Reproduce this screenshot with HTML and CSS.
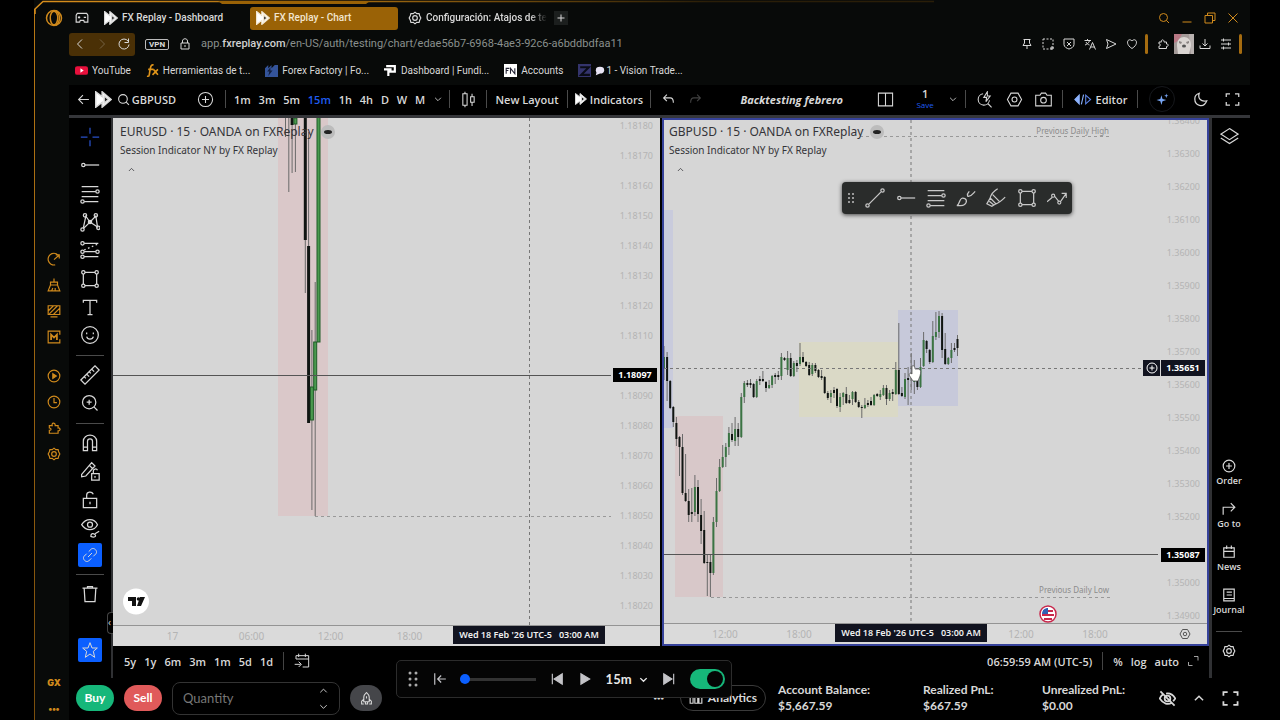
FILE: index.html
```
<!DOCTYPE html>
<html lang="en">
<head>
    <meta charset="UTF-8" />
    <meta name="viewport" content="width=device-width, initial-scale=1" />
    <title>FX Replay - Chart</title>
    <link rel="stylesheet" href="styles.css">
</head>
<body>
    <!-- shared icons -->
    <svg class="sprite" width="0" height="0" aria-hidden="true">
        <symbol id="i-fx" viewBox="0 0 24 24"><path d="M1 1l9 7V1l13 11-13 11v-7l-9 7z" fill="#fff"/><path d="M13 7l6 5-6 5z" fill="#222"/></symbol>
        <symbol id="i-gear" viewBox="0 0 24 24"><path d="M12 2l3 2.500 4-.2 1 3.700 2 4-2 4-1 3.700-4-.2L12 22l-3-2.500-4 .2-1-3.700-2-4 2-4 1-3.700 4 .2z"/><circle cx="12" cy="12" r="4"/></symbol>
        <symbol id="i-hex" viewBox="0 0 24 24"><path d="M7 3h10l5 9-5 9H7l-5-9z"/><circle cx="12" cy="12" r="3.500"/></symbol>
        <symbol id="i-puzzle" viewBox="0 0 24 24"><path d="M4 8h5c-2-5 5-6 5-1v1h5v4c4-1 5 5 0 5v4H4v-5c4 0 4-4 0-4z"/></symbol>
        <symbol id="i-down" viewBox="0 0 24 24"><path d="M5 9l7 7 7-7"/></symbol>
        <symbol id="i-up" viewBox="0 0 24 24"><path d="M5 16l7-7 7 7"/></symbol>
        <symbol id="i-full" viewBox="0 0 24 24"><path d="M2 8V3h6M16 3h6v5M22 16v5h-6M8 21H2v-5"/></symbol>
        <symbol id="i-search" viewBox="0 0 24 24"><circle cx="11" cy="11" r="8"/><path d="M17 17l5 5"/></symbol>
        <symbol id="i-plus" viewBox="0 0 24 24"><circle cx="12" cy="12" r="10"/><path d="M12 7v10M7 12h10"/></symbol>
        <symbol id="i-ray" viewBox="0 0 24 24"><circle cx="4" cy="12" r="2"/><path d="M6 12h17"/></symbol>
        <symbol id="i-fib" viewBox="0 0 24 24"><path d="M2 3h20M2 9h17M2 15h20M5 21h17"/><circle cx="21" cy="9" r="2"/><circle cx="3" cy="21" r="2"/></symbol>
        <symbol id="i-rect" viewBox="0 0 24 24"><path d="M4 6v12M20 6v12M6 4h12M6 20h12"/><circle cx="4" cy="4" r="2"/><circle cx="20" cy="4" r="2"/><circle cx="4" cy="20" r="2"/><circle cx="20" cy="20" r="2"/></symbol>
    </svg>

    <div class="window">
        <svg class="frame" width="100%" height="14" aria-hidden="true">
            <defs><linearGradient id="fade"><stop offset="0" stop-color="#d98f1c"/><stop offset="0.350" stop-color="#a56c10"/><stop offset="0.750" stop-color="#2a1e08"/></linearGradient></defs>
            <path d="M1 14V9L9 1.500H900" fill="none" stroke="url(#fade)" stroke-width="1.500"/>
            <path d="M184 1h152l-4 3H188z" fill="#9a6206"/>
        </svg>
        <nav class="gx-sidebar" aria-label="Browser sidebar">
            <svg class="opera" viewBox="0 0 24 24"><circle cx="12" cy="12" r="10"/><ellipse cx="12" cy="12" rx="5" ry="9"/><path d="M14 2c7 4 7 16 0 20"/></svg>
            <div class="gx-group">
                <svg viewBox="0 0 24 24"><path d="M21 8a10 10 0 1 0-7 14M12 13l8-7M15 5h6v6"/></svg>
                <svg viewBox="0 0 24 24"><path d="M12 1v6M6 7h12v5H6zM6 12l-4 10h20l-4-10M8 22l2-5M14 22v-5"/></svg>
                <svg viewBox="0 0 24 24"><path d="M2 3h20v15H2zM2 12l9-9M4 17L18 3M11 18L22 7M6 22h12"/></svg>
                <svg viewBox="0 0 24 24"><path d="M22 8V2H2v20h20v-6"/><path d="M7 17V8l5 5 5-5v9" stroke-width="3"/></svg>
            </div>
            <div class="gx-group">
                <svg viewBox="0 0 24 24"><circle cx="12" cy="12" r="10"/><path d="M10 8l6 4-6 4z" fill="currentColor"/></svg>
                <svg viewBox="0 0 24 24"><circle cx="12" cy="12" r="10"/><path d="M12 5v8h5"/></svg>
                <svg><use href="#i-puzzle"/></svg>
                <svg><use href="#i-gear"/></svg>
            </div>
            <div class="gx-foot"><b>GX</b><b>•••</b></div>
        </nav>

        <div class="main">
            <div class="tabs">
                <svg class="game" viewBox="0 0 24 24"><path d="M4 4h16l2 3v12h-6l-1-3H9l-1 3H2V7zM7 9v4M5 11h4M15 11h4"/></svg>
                <a class="tab" href="#"><svg><use href="#i-fx"/></svg><span>FX Replay - Dashboard</span></a>
                <a class="tab active" href="#"><svg><use href="#i-fx"/></svg><span>FX Replay - Chart</span></a>
                <a class="tab cut" href="#"><svg><use href="#i-gear"/></svg><span>Configuración: Atajos de te</span></a>
                <button class="new-tab" aria-label="New tab"><svg viewBox="0 0 24 24"><path d="M12 5v14M5 12h14"/></svg></button>
                <div class="win-buttons">
                    <svg><use href="#i-search"/></svg>
                    <svg viewBox="0 0 24 24"><path d="M3 20h18"/></svg>
                    <svg viewBox="0 0 24 24"><path d="M2 7h15v15H2zM7 7V2h15v15h-5"/></svg>
                    <svg viewBox="0 0 24 24"><path d="M3 3l18 18M21 3L3 21"/></svg>
                </div>
            </div>

            <div class="address">
                <div class="nav-buttons">
                    <button aria-label="Back"><svg viewBox="0 0 24 24"><path d="M16 3l-9 9 9 9"/></svg></button>
                    <button aria-label="Forward" class="off"><svg viewBox="0 0 24 24"><path d="M8 3l9 9-9 9"/></svg></button>
                    <button aria-label="Reload"><svg viewBox="0 0 24 24"><path d="M20 6a10 10 0 1 0 2 7M21 1v8h-8"/></svg></button>
                </div>
                <span class="vpn">VPN</span>
                <svg class="lock" viewBox="0 0 24 24"><path d="M4 10h16v12H4zM7 10V6c0-6 10-6 10 0v4M12 14v4"/></svg>
                <span class="url">app.<b>fxreplay.com</b>/en-US/auth/testing/chart/edae56b7-6968-4ae3-92c6-a6bddbdfaa11</span>
                <div class="extensions">
                    <svg viewBox="0 0 24 24"><path d="M5 3h14M7 3v7l-3 5h16l-3-5V3M12 15v7"/></svg>
                    <svg viewBox="0 0 24 24"><path d="M2 2h20v20H2z" stroke-dasharray="4 3"/><path d="M20 16v8M16 20h8"/></svg>
                    <svg viewBox="0 0 24 24"><path d="M2 2h20v11c0 5-6 8-10 9-4-1-10-4-10-9zM8 8l8 8M16 8l-8 8"/></svg>
                    <svg viewBox="0 0 24 24"><path d="M1 5h13M7 2v3M11 5c-1 5-5 8-9 9M4 8c2 4 4 5 7 6M11 23l6-14 6 14M13 18h8"/></svg>
                    <svg viewBox="0 0 24 24"><path d="M3 3l19 9-19 9 3-9z"/></svg>
                    <svg viewBox="0 0 24 24"><path d="M12 21C-4 11 5-2 12 6c7-8 16 5 0 15z"/></svg>
                    <i class="bar"></i>
                    <svg><use href="#i-puzzle"/></svg>
                    <svg class="avatar" viewBox="0 0 20 20"><path d="M0 0h20v20H0z" fill="#a39a98"/><path d="M0 0h8L4 7 0 9z" fill="#b87884"/><path d="M15 0h5v20h-3z" fill="#b8b2b0"/><path d="M4 20l-1-8c-1-12 15-12 14 0l-2 8z" fill="#dad5d2"/><path d="M5 7l3 1-1 2-2-1zM15 7l-3 1 1 2 2-1z" fill="#8a8482"/><ellipse cx="10" cy="12" rx="2" ry="1.500" fill="#555"/></svg>
                    <svg viewBox="0 0 24 24"><path d="M12 2v14M7 11l5 5 5-5M2 15v6h20v-6"/></svg>
                    <svg viewBox="0 0 24 24"><path d="M2 4h20M2 12h20M2 20h20M7 1v6M17 9v6M7 17v6"/></svg>
                    <i class="bar"></i>
                </div>
            </div>

            <div class="bookmarks">
                <a href="#"><svg viewBox="0 0 12 12"><rect y="2" width="12" height="8" rx="2" fill="#e8103c"/><path d="M5 4l3 2-3 2z" fill="#fff"/></svg>YouTube</a>
                <a href="#"><svg viewBox="0 0 12 12"><path d="M7 1c-3-1-3 3-4 9 0 2-2 1-2 1M2 5h5M7 5l4 5M11 5l-5 5" fill="none" stroke="#e0951a" stroke-width="1.500"/></svg>Herramientas de t...</a>
                <a href="#"><svg viewBox="0 0 12 12"><path d="M0 4l3-3v3l3-3v3l3-3h3v11H0z" fill="#34549a"/><path d="M5 3L2 7h2l-1 4 4-5H5z" fill="#122040"/></svg>Forex Factory | Fo...</a>
                <a href="#"><svg viewBox="0 0 12 12"><path d="M2 2h8v5H4v4M0 5h7" fill="none" stroke="#fff" stroke-width="2"/></svg>Dashboard | Fundi...</a>
                <a href="#"><svg viewBox="0 0 12 12"><path d="M0 0h12v12H0z" fill="#fff"/><path d="M2 9V4h3M2 6h2M6 9V4l4 5V4" fill="none" stroke="#223" stroke-width="1"/></svg>Accounts</a>
                <a href="#"><svg viewBox="0 0 12 12"><path d="M0 0h12v12H0z" fill="#34346c"/><path d="M2 3h8l-7 7h8" fill="none" stroke="#0a0c16" stroke-width="2"/></svg><span class="chat"><svg viewBox="0 0 12 12"><ellipse cx="6" cy="5" rx="5" ry="4" fill="#e8e4f4"/><path d="M2 7l-1 4 5-2z" fill="#e8e4f4"/></svg>1 - Vision Trade...</span></a>
            </div>

            <div class="toolbar">
                <div class="tb-group symbol">
                    <svg viewBox="0 0 24 24"><path d="M22 12H3M11 4l-8 8 8 8"/></svg>
                    <svg class="logo"><use href="#i-fx"/></svg>
                    <button class="symbol-btn"><svg><use href="#i-search"/></svg>GBPUSD</button>
                    <button aria-label="Compare" class="push"><svg class="big"><use href="#i-plus"/></svg></button>
                </div>
                <div class="tb-group intervals">
                    <button>1m</button><button>3m</button><button>5m</button><button class="on">15m</button><button>1h</button><button>4h</button><button>D</button><button>W</button><button>M</button>
                    <button aria-label="More intervals"><svg class="tiny"><use href="#i-down"/></svg></button>
                </div>
                <div class="tb-group style"><button aria-label="Candles"><svg class="big" viewBox="0 0 24 24"><path d="M4 4h6v16H4zM7 1v3M7 20v3M15 8h5v8h-5zM17 4v4M17 16v5"/></svg></button></div>
                <div class="tb-group layout"><button>New Layout</button></div>
                <div class="tb-group indicators"><button><svg class="mini"><use href="#i-fx"/></svg>Indicators</button></div>
                <div class="tb-group history">
                    <button aria-label="Undo"><svg viewBox="0 0 24 24"><path d="M9 3L3 9l6 6M3 9h12c4 0 6 3 6 9"/></svg></button>
                    <button aria-label="Redo" class="off redo"><svg viewBox="0 0 24 24"><path d="M15 3l6 6-6 6M21 9H9c-4 0-6 3-6 9"/></svg></button>
                    <strong>Backtesting febrero</strong>
                    <button aria-label="Layout"><svg class="big" viewBox="0 0 24 24"><path d="M2 3h20v18H2zM12 3v18"/></svg></button>
                    <button class="save"><span>1</span><em>Save</em></button>
                    <button aria-label="Save options"><svg class="tiny"><use href="#i-down"/></svg></button>
                </div>
                <div class="tb-group tools">
                    <button aria-label="Quick search"><svg class="big" viewBox="0 0 24 24"><path d="M10 4a8 8 0 1 0 9 9M17 18l5 5M16 1l-5 8h4l-1 6 6-8h-4z"/></svg></button>
                    <button aria-label="Settings"><svg class="big"><use href="#i-hex"/></svg></button>
                    <button aria-label="Snapshot"><svg class="big" viewBox="0 0 24 24"><path d="M1 6h6l2-3h6l2 3h6v15H1z"/><circle cx="12" cy="13" r="4"/></svg></button>
                </div>
                <div class="tb-group editor"><button><svg viewBox="0 0 32 24"><path d="M9 4v16L1 12z" fill="#8eb4ff" stroke="#8eb4ff"/><path d="M17 3l-4 18" stroke="#8eb4ff"/><path d="M21 4v16l9-8z" stroke="#5f86e8"/></svg>Editor</button></div>
                <div class="tb-group end">
                    <button aria-label="Assistant" class="spark"><svg viewBox="0 0 24 24"><path d="M10 4l2 7 7 2-7 2-2 7-2-7-7-2 7-2zM19 1l1 3 3 1-3 1-1 3-1-3-3-1 3-1z" fill="#79a7f5" stroke="none"/></svg></button>
                    <button aria-label="Dark mode"><svg viewBox="0 0 24 24" class="moon"><path d="M10 2c-3 9 3 14 12 12C17 27 2 22 3 10c0-4 4-7 7-8z"/></svg></button>
                    <button aria-label="Fullscreen"><svg class="moon"><use href="#i-full"/></svg></button>
                </div>
            </div>

            <div class="workarea">
                <div class="draw-tools">
                    <div class="tool-list">
                        <button aria-label="Crosshair" class="blue"><svg viewBox="0 0 24 24"><path d="M12 1v7M12 16v7M1 12h8M15 12h8"/></svg></button>
                        <button aria-label="Horizontal ray"><svg><use href="#i-ray"/></svg></button>
                        <button aria-label="Fibonacci"><svg><use href="#i-fib"/></svg></button>
                        <button aria-label="Pattern"><svg viewBox="0 0 24 24"><path d="M4 19L7 5l5 7 7-7 2 13-9-6-8 8"/><circle cx="6" cy="4" r="2"/><circle cx="19" cy="4" r="2"/><circle cx="3" cy="21" r="2"/><circle cx="22" cy="19" r="2"/><circle cx="12" cy="12" r="2"/></svg></button>
                        <button aria-label="Position"><svg viewBox="0 0 24 24"><path d="M5 4h17M5 14h14M5 20h17"/><path d="M5 12l16-7" stroke-dasharray="2 3"/><circle cx="3" cy="4" r="2"/><circle cx="3" cy="14" r="2"/><circle cx="21" cy="14" r="2"/><circle cx="3" cy="20" r="2"/></svg></button>
                        <button aria-label="Rectangle"><svg><use href="#i-rect"/></svg></button>
                        <button aria-label="Text"><svg viewBox="0 0 24 24"><path d="M4 7V4h16v3M12 4v17M9 21h6"/></svg></button>
                        <button aria-label="Emoji"><svg viewBox="0 0 24 24"><circle cx="12" cy="12" r="10"/><path d="M8 14c1 4 7 4 8 0M8 9v2M16 9v2"/></svg></button>
                        <hr>
                        <button aria-label="Measure"><svg viewBox="0 0 24 24"><path d="M1 18L18 1l5 5L6 23zM5 14l2 2M8 11l3 3M11 8l2 2M14 5l3 3"/></svg></button>
                        <button aria-label="Zoom in"><svg viewBox="0 0 24 24"><circle cx="11" cy="11" r="8"/><path d="M17 17l4 4M11 8v6M8 11h6"/></svg></button>
                        <hr>
                        <button aria-label="Magnet"><svg viewBox="0 0 24 24"><path d="M4 21V10c0-10 16-10 16 0v11h-5V10c0-4-6-4-6 0v11zM4 17h5M15 17h5"/></svg></button>
                        <button aria-label="Lock drawing"><svg viewBox="0 0 24 24"><path d="M2 16L14 2l4 4L7 18l-5 1zM11 5l4 4M14 15h9v8h-9zM16 15v-3c0-3 4-3 5-1M18 18v2"/></svg></button>
                        <button aria-label="Lock"><svg viewBox="0 0 24 24"><path d="M4 10h16v11H4zM8 10V6c0-4 6-5 8-1M12 14v3"/></svg></button>
                        <button aria-label="Hide drawings"><svg viewBox="0 0 24 24"><path d="M2 8c5-8 15-8 19 0-4 8-14 8-19 0zM13 22c0-4 3-4 5-2s-1 4-5 2zM18 19l5-3"/><circle cx="12" cy="8" r="3"/></svg></button>
                        <button aria-label="Link" class="fill"><svg viewBox="0 0 24 24"><path d="M9 15l6-6M10 7l4-4c4-3 10 3 7 7l-4 4M14 17l-4 4c-4 3-10-3-7-7l4-4"/></svg></button>
                        <hr>
                        <button aria-label="Remove"><svg viewBox="0 0 24 24"><path d="M3 5h18M5 5l1 16h12l1-16M9 5V3h6v2"/></svg></button>
                    </div>
                    <button aria-label="Favorites" class="fill star"><svg viewBox="0 0 24 24"><path d="M12 1l3 8h8l-6 5 2 9-7-5-7 5 2-9-6-5h8z"/></svg></button>
                    <span class="collapse">‹</span>
                </div>

                <div class="workspace">
                    <div class="charts">
                        <section class="chart">
                            <div class="pane">
                                <svg width="100%" height="100%">
                                    <g transform="translate(-113 -118)">
                                        <rect x="278" y="118" width="50" height="398" fill="#dac8c9"/>
                                        <g id="eurusd"></g>
                                        <path d="M315 516.500H611" class="level"/>
                                        <path d="M113 375.500H615" stroke="#555"/>
                                        <path d="M529.500 118V625" class="cross"/>
                                        <circle cx="136" cy="601.500" r="13" fill="#fff"/>
                                        <path d="M128 597h8v9h-4v-5h-4zM140 597h5l-4 9h-4z"/><circle cx="138.500" cy="599" r="1.800"/>
                                    </g>
                                </svg>
                                <div class="legend">
                                    <h2>EURUSD · 15 · OANDA on FXReplay <i class="pill"></i></h2>
                                    <p>Session Indicator NY by FX Replay</p>
                                    <svg><use href="#i-up"/></svg>
                                </div>
                            </div>
                            <div class="prices">
                                <span>1.18180</span><span>1.18170</span><span>1.18160</span><span>1.18150</span><span>1.18140</span><span>1.18130</span><span>1.18120</span><span>1.18110</span><span></span><span>1.18090</span><span>1.18080</span><span>1.18070</span><span>1.18060</span><span>1.18050</span><span>1.18040</span><span>1.18030</span><span>1.18020</span>
                                <b class="price-tag">1.18097</b>
                            </div>
                            <div class="times">
                                <span>17</span><span>06:00</span><span>12:00</span><span>18:00</span>
                                <b class="time-tag">Wed 18 Feb '26 UTC-5 &nbsp; 03:00 AM</b>
                            </div>
                        </section>

                        <section class="chart selected">
                            <div class="pane">
                                <svg width="100%" height="100%">
                                    <g transform="translate(-664 -120)">
                                        <rect x="664" y="210" width="9" height="218" fill="#c9cbdc"/>
                                        <rect x="675" y="416" width="48" height="181" fill="#d8c8c9"/>
                                        <rect x="799" y="342" width="99" height="75" fill="#dad9c6"/>
                                        <rect x="898" y="310" width="60" height="96" fill="#c7c9da"/>
                                        <path d="M860 136.500H1110M711 597.500H1110" class="level"/>
                                        <g id="gbpusd"></g>
                                        <path d="M664 554.500H1162" stroke="#555"/>
                                        <path d="M664 368.500H1145M911 120V625" class="cross"/>
                                        <text x="1109" y="134" text-anchor="end">Previous Daily High</text>
                                        <text x="1109" y="593" text-anchor="end">Previous Daily Low</text>
                                        <circle cx="1048" cy="614" r="8" fill="#fff" stroke="#c8284c" stroke-width="1.500"/>
                                        <path d="M1043 611h10M1042 615h12M1044 619h8" stroke="#c8284c" stroke-width="2"/>
                                        <path d="M1042 614c0-4 3-6 6-6v6z" fill="#2f5fb4"/>
                                        <path d="M912 366c2-1 3 1 3 3h4c2 1 2 3 1 7l-2 5h-5l-4-6c0-2 2-2 3-1z" fill="#fff" stroke="#444" stroke-width="0.700"/>
                                    </g>
                                </svg>
                                <div class="legend">
                                    <h2>GBPUSD · 15 · OANDA on FXReplay <i class="pill"></i></h2>
                                    <p>Session Indicator NY by FX Replay</p>
                                    <svg><use href="#i-up"/></svg>
                                </div>
                                <div class="favorites">
                                    <svg class="grip" viewBox="0 0 8 12"><path d="M1 1h2v2H1zM5 1h2v2H5zM1 5h2v2H1zM5 5h2v2H5zM1 9h2v2H1zM5 9h2v2H5z"/></svg>
                                    <button aria-label="Trend line"><svg viewBox="0 0 24 24"><path d="M5 19L19 5"/><circle cx="3" cy="21" r="2"/><circle cx="21" cy="3" r="2"/></svg></button>
                                    <button aria-label="Ray"><svg><use href="#i-ray"/></svg></button>
                                    <button aria-label="Fib"><svg><use href="#i-fib"/></svg></button>
                                    <button aria-label="Brush"><svg viewBox="0 0 24 24"><path d="M1 21c4-1 2-8 7-9 5 0 6 5 2 8-2 2-5 1-9 1zM14 10c-1-4 1-5 2-6M14 10c4 1 6-3 9-6"/></svg></button>
                                    <button aria-label="Highlighter"><svg viewBox="0 0 24 24"><path d="M14 1C9 4 6 8 5 12l7 7c4-1 7-4 11-8M5 12l-4 7 6 3 5-3M8 8l8 8M4 16l5 4"/></svg></button>
                                    <button aria-label="Rectangle"><svg><use href="#i-rect"/></svg></button>
                                    <button aria-label="Path"><svg viewBox="0 0 26 24"><path d="M0 17l7-6M10 10l5 6M18 16l7-10M19 6h6v6"/><circle cx="8" cy="9" r="2"/><circle cx="16" cy="18" r="2"/></svg></button>
                                </div>
                            </div>
                            <div class="prices">
                                <span>1.36400</span><span>1.36300</span><span>1.36200</span><span>1.36100</span><span>1.36000</span><span>1.35900</span><span>1.35800</span><span>1.35700</span><span>1.35600</span><span>1.35500</span><span>1.35400</span><span>1.35300</span><span>1.35200</span><span></span><span>1.35000</span><span>1.34900</span>
                                <b class="price-tag cursor">1.35651</b>
                                <button class="add" aria-label="Add order"><svg><use href="#i-plus"/></svg></button>
                                <b class="price-tag">1.35087</b>
                            </div>
                            <div class="times">
                                <span>12:00</span><span>18:00</span><span></span><span></span><span>12:00</span><span>18:00</span>
                                <b class="time-tag">Wed 18 Feb '26 UTC-5 &nbsp; 03:00 AM</b>
                                <svg><use href="#i-hex"/></svg>
                            </div>
                        </section>
                    </div>
                    <div class="ranges">
                        <button>5y</button><button>1y</button><button>6m</button><button>3m</button><button>1m</button><button>5d</button><button>1d</button>
                        <i class="line"></i>
                        <button aria-label="Go to date"><svg viewBox="0 0 24 24"><path d="M3 9V4h19v17h-9M3 9h19M7 1v5M17 1v5M1 17h9M7 13l4 4-4 4"/></svg></button>
                        <span class="clock">06:59:59 AM (UTC-5)</span>
                        <i class="line"></i>
                        <button>%</button><button>log</button><button>auto</button>
                        <button aria-label="Maximize"><svg class="max" viewBox="0 0 24 24"><path d="M3 14v7h8M14 3h8v8"/></svg></button>
                    </div>
                </div>

                <aside class="rail">
                    <button aria-label="Object tree" class="layers"><svg viewBox="0 0 24 24"><path d="M12 2l11 7-11 7L1 9zM1 14l11 7 11-7"/></svg></button>
                    <button><svg><use href="#i-plus"/></svg>Order</button>
                    <button><svg viewBox="0 0 24 24"><path d="M2 22V9h20M15 2l7 7-7 7"/></svg>Go to</button>
                    <button><svg viewBox="0 0 24 24"><path d="M3 5h18v16H3zM3 11h18M8 1v6M16 1v6"/></svg>News</button>
                    <button><svg viewBox="0 0 24 24"><path d="M3 2h18v20H3zM3 18h18M8 7h9M8 12h9"/></svg>Journal</button>
                    <hr>
                    <button aria-label="Settings"><svg><use href="#i-gear"/></svg></button>
                </aside>
            </div>

            <div class="orders">
                <button class="buy">Buy</button>
                <button class="sell">Sell</button>
                <label class="quantity">
                    <input type="number" placeholder="Quantity" aria-label="Quantity">
                    <span><svg><use href="#i-up"/></svg><svg><use href="#i-down"/></svg></span>
                </label>
                <button class="rocket" aria-label="Advanced order"><svg viewBox="0 0 24 24"><path d="M7 18V9c0-4 3-6 5-8 2 2 5 4 5 8v9zM7 13l-4 4v5h4M17 13l4 4v5h-4M12 8v4M10 18v4h4v-4"/></svg></button>
                <span class="more">•••</span>
                <button class="analytics"><svg viewBox="0 0 24 24"><path d="M2 10h5v11H2zM10 4h5v17h-5zM17 8h5v13h-5z"/></svg>Analytics</button>
                <div class="stat balance">Account Balance:<br>$5,667.59</div>
                <div class="stat realized">Realized PnL:<br>$667.59</div>
                <div class="stat unrealized">Unrealized PnL:<br>$0.00</div>
                <div class="order-icons">
                    <svg viewBox="0 0 24 24"><path d="M2 2l20 20M6 6c-3 2-4 4-5 6 5 8 12 9 17 6M10 5c6-1 10 2 13 7l-3 4"/><circle cx="12" cy="12" r="4"/></svg>
                    <svg><use href="#i-up"/></svg>
                    <svg><use href="#i-full"/></svg>
                </div>
                <div class="player">
                    <svg class="grip" viewBox="0 0 12 16"><circle cx="3" cy="2" r="1.500"/><circle cx="9" cy="2" r="1.500"/><circle cx="3" cy="8" r="1.500"/><circle cx="9" cy="8" r="1.500"/><circle cx="3" cy="14" r="1.500"/><circle cx="9" cy="14" r="1.500"/></svg>
                    <button aria-label="Jump back"><svg viewBox="0 0 24 24"><path d="M3 2v20M22 12H8M14 6l-6 6 6 6"/></svg></button>
                    <input type="range" min="0" max="100" value="0" aria-label="Speed">
                    <button aria-label="Previous bar"><svg viewBox="0 0 24 24"><path d="M4 3v18"/><path d="M21 3v18L7 12z" fill="currentColor"/></svg></button>
                    <button aria-label="Play"><svg viewBox="0 0 24 24"><path d="M5 3v18l15-9z" fill="currentColor"/></svg></button>
                    <button class="step">15m <svg><use href="#i-down"/></svg></button>
                    <button aria-label="Next bar"><svg viewBox="0 0 24 24"><path d="M20 3v18"/><path d="M3 3v18l14-9z" fill="currentColor"/></svg></button>
                    <input type="checkbox" class="switch" checked aria-label="Replay mode">
                </div>
            </div>
        </div>
    </div>
    <script src="chart.js"></script>
</body>
</html>
```
FILE: styles.css
```
* {
    box-sizing: border-box;
}

body {
    margin: 0;
    background: #000;
    color: #d8d8d8;
    font-family: "Open Sans", "Noto Sans", sans-serif;
    font-size: 12px;
}

button {
    display: flex;
    align-items: center;
    justify-content: center;
    padding: 0;
    border: none;
    background: none;
    color: inherit;
    font: inherit;
    cursor: pointer;
}

a {
    color: inherit;
    text-decoration: none;
}

svg {
    flex-shrink: 0;
    fill: none;
    stroke: currentColor;
    stroke-width: 2;
}

hr {
    margin: 4px 0;
    border: none;
    border-top: 1px solid #4a4a4a;
}

.sprite {
    position: absolute;
}

.window {
    position: relative;
    display: flex;
    height: 100vh;
    margin: 0 30px 0 34px;
    background: #080a09;
}

.frame {
    position: absolute;
    top: 0;
    left: 0;
    stroke: none;
}

/* browser sidebar */
.gx-sidebar {
    display: flex;
    flex-direction: column;
    align-items: center;
    width: 35px;
    padding: 9px 0 5px 4px;
    border-left: 1px solid #b87814;
    border-image: linear-gradient(transparent 10px, #b87814 10px, #7a4e0c) 1;
    color: #d08a1c;
    flex-shrink: 0;
}

.gx-sidebar svg {
    width: 14px;
    height: 14px;
}

.gx-sidebar .opera {
    width: 18px;
    height: 18px;
    margin-bottom: 225px;
}

.gx-group {
    display: flex;
    flex-direction: column;
    gap: 12px;
    margin-bottom: 25px;
}

.gx-foot {
    display: flex;
    flex-direction: column;
    align-items: center;
    gap: 14px;
    margin-top: auto;
    font: 800 9px/12px Inter, sans-serif;
}

.main {
    display: flex;
    flex-direction: column;
    flex: 1;
    min-width: 0;
}

/* tabs */
.tabs {
    display: flex;
    align-items: center;
    gap: 4px;
    height: 32px;
    padding: 4px 11px 0 6px;
    font: 500 10px/14px Roboto, sans-serif;
}

.tabs .game {
    width: 14px;
    height: 14px;
    margin-right: 5px;
}

.tab {
    display: flex;
    align-items: center;
    gap: 4px;
    width: 148px;
    height: 23px;
    padding: 0 6px;
    border-radius: 3px;
    white-space: nowrap;
}

.tab svg {
    width: 14px;
    height: 14px;
}

.tab.active {
    background: #9a6206;
    color: #f2e6d0;
}

.tab.cut {
    padding-right: 0;
}

.tab.cut span {
    mask-image: linear-gradient(90deg, #000 86%, transparent);
}

.new-tab {
    width: 14px;
    height: 14px;
    background: #1c1f1e;
}

.new-tab svg {
    width: 12px;
    height: 12px;
}

.win-buttons {
    display: flex;
    gap: 11px;
    margin-left: auto;
    color: #d08a1c;
}

.win-buttons svg {
    width: 12px;
    height: 12px;
}

/* address bar */
.address {
    display: flex;
    align-items: center;
    height: 24px;
    padding-right: 8px;
    font: 11px/16px Roboto, sans-serif;
}

.nav-buttons {
    display: flex;
    align-items: center;
    justify-content: space-around;
    width: 66px;
    height: 23px;
    margin-right: 10px;
    border-radius: 3px;
    background: #4a3006;
}

.nav-buttons svg {
    width: 12px;
    height: 12px;
}

.off {
    opacity: 0.3;
}

.vpn {
    padding: 0 3px;
    border: 1px solid #bbb;
    border-radius: 2px;
    font-size: 8px;
    font-weight: 700;
    line-height: 9px;
}

.lock {
    width: 12px;
    height: 12px;
    margin: 0 10px;
}

.url {
    color: #8a908d;
}

.url b {
    color: #d0d0d0;
    font-weight: 500;
}

.extensions {
    display: flex;
    align-items: center;
    gap: 9px;
    margin-left: auto;
}

.extensions svg {
    width: 12px;
    height: 12px;
}

.extensions .avatar {
    width: 20px;
    height: 20px;
    margin: 0 -4px;
    stroke: none;
}

.bar {
    width: 3px;
    height: 20px;
    margin-left: -2px;
    border-radius: 2px;
    background: #a56c10;
}

/* bookmarks */
.bookmarks {
    display: flex;
    align-items: center;
    gap: 15px;
    height: 29px;
    padding-left: 6px;
    font: 10px/14px Roboto, sans-serif;
}

.bookmarks a,
.chat {
    display: flex;
    align-items: center;
    gap: 4px;
}

.chat {
    gap: 1px;
}

.bookmarks svg {
    width: 13px;
    height: 13px;
    stroke-width: 0;
}

.bookmarks .chat svg {
    width: 10px;
    height: 10px;
}

/* app toolbar */
.toolbar {
    display: flex;
    align-items: center;
    height: 33px;
    padding-bottom: 2px;
    border-bottom: 3px solid #35363a;
    background: #000;
    font-size: 11px;
    font-weight: 600;
}

.tb-group {
    display: flex;
    align-items: center;
    justify-content: space-between;
    height: 18px;
    border-right: 1px solid #4a4a4a;
}

.tb-group:last-child {
    border: none;
}

.toolbar svg {
    width: 13px;
    height: 13px;
}

.toolbar .logo {
    width: 17px;
    height: 17px;
}

.toolbar .big {
    width: 17px;
    height: 17px;
    stroke-width: 1.5;
}

.toolbar .moon {
    width: 15px;
    height: 15px;
}

.toolbar .tiny {
    width: 10px;
    height: 10px;
}

.symbol {
    width: 157px;
    padding: 0 11px 0 8px;
}

.symbol .push {
    margin-left: 16px;
}

.symbol-btn {
    gap: 2px;
}

.intervals {
    width: 224px;
    padding: 0 6px 0 8px;
}

.intervals .on {
    color: #1f5cf0;
}

.style {
    width: 37px;
    justify-content: center;
}

.layout {
    width: 81px;
    justify-content: center;
}

.indicators {
    width: 83px;
    justify-content: center;
}

.indicators button {
    gap: 3px;
}

.toolbar .mini {
    width: 12px;
    height: 12px;
}

.history {
    flex: 1;
    padding: 0 7px 0 11px;
}

.history strong {
    margin: 0 20px 0 24px;
    font-style: italic;
    font-weight: 700;
}

.save {
    flex-direction: column;
    margin-left: 8px;
    line-height: 11px;
}

.save em {
    color: #1f5cf0;
    font-size: 8px;
    font-style: normal;
    font-weight: 400;
}

.tools {
    width: 97px;
    padding: 0 10px;
}

.editor {
    width: 75px;
    justify-content: center;
}

.editor button {
    gap: 3px;
}

.editor svg {
    width: 20px;
}

.end {
    width: 112px;
    padding: 0 10px 0 11px;
}

.spark {
    width: 26px;
    height: 26px;
    border: 1px solid #16181c;
    border-radius: 50%;
}

/* work area */
.workarea {
    display: flex;
    flex: 1;
    min-height: 0;
    background: #000;
}

.draw-tools {
    position: relative;
    display: flex;
    flex-direction: column;
    align-items: center;
    width: 44px;
    padding: 6px 0 16px;
    border-right: 2px solid #303134;
}

.tool-list {
    display: flex;
    flex: 1;
    flex-direction: column;
    justify-content: space-between;
    margin-bottom: 31px;
}

.draw-tools button {
    width: 28px;
    height: 26px;
}

.draw-tools svg {
    width: 20px;
    height: 20px;
    stroke-width: 1.5;
}

.draw-tools .blue {
    color: #2850c8;
}

.draw-tools .fill {
    width: 24px;
    height: 24px;
    align-self: center;
    border-radius: 2px;
    background: #0b5fff;
}

.draw-tools .fill svg {
    width: 16px;
    height: 16px;
}

.collapse {
    position: absolute;
    right: -2px;
    bottom: 44px;
    width: 6px;
    height: 22px;
    border: 1px solid #444;
    border-right: none;
    border-radius: 4px 0 0 4px;
    background: #000;
    font-size: 10px;
    line-height: 18px;
}

.workspace {
    display: flex;
    flex: 1;
    flex-direction: column;
    min-width: 0;
}

.charts {
    display: grid;
    flex: 1;
    grid-template: minmax(0, 1fr) / 1fr 1fr;
    gap: 2px;
    min-height: 0;
}

.chart {
    display: grid;
    grid-template: minmax(0, 1fr) 21px / minmax(0, 1fr) 49px;
    min-width: 0;
    background: #d6d6d6;
    color: #b4b4b4;
    font-family: "Noto Sans", sans-serif;
    font-size: 10px;
}

.chart.selected {
    border: 2px solid #36429a;
}

.pane {
    position: relative;
    min-width: 0;
}

.pane > svg {
    display: block;
    fill: #111;
    stroke: none;
    stroke-width: 1;
}

.pane text {
    fill: #8c8c8c;
    font-size: 8px;
}

.level {
    stroke: #999;
    stroke-dasharray: 3 3;
}

.cross {
    stroke: #777;
    stroke-dasharray: 3 3;
}

.wick {
    stroke: #6a6a6a;
    stroke-width: 1;
}

.up {
    fill: #3b7443;
}

.down {
    fill: #101512;
}

.bright .up {
    fill: #4a9a4e;
    stroke: #215c28;
    stroke-width: 1;
}

.legend {
    position: absolute;
    top: 5px;
    left: 7px;
    color: #343438;
}

.selected .legend {
    top: 3px;
    left: 5px;
}

.legend h2 {
    display: flex;
    align-items: center;
    gap: 7px;
    margin: 0;
    font-size: 12px;
    font-weight: 400;
    line-height: 17px;
}

.legend p {
    margin: 3px 0 8px;
    font-size: 10px;
    line-height: 14px;
}

.legend svg {
    display: block;
    width: 9px;
    height: 9px;
    margin-left: 7px;
}

.pill {
    width: 14px;
    height: 14px;
    border: solid #bcbcbc;
    border-width: 5px 3px;
    border-radius: 7px;
    background: #222;
}

.prices {
    position: relative;
    display: flex;
    flex-direction: column;
    min-height: 0;
    margin-top: -7px;
    clip-path: inset(7px -20px 0 -20px);
    font-size: 9px;
    text-align: right;
}

.prices span {
    flex-shrink: 0;
    height: 30px;
    padding-right: 7px;
    line-height: 30px;
}

.selected .prices {
    margin-top: -17px;
    clip-path: inset(17px 0 0 -20px);
}

.selected .prices span {
    height: 33px;
    line-height: 35px;
}

.price-tag {
    position: absolute;
    top: 257px;
    right: 3px;
    width: 44px;
    background: #000;
    color: #fff;
    line-height: 14px;
    text-align: center;
}

.selected .price-tag {
    top: 445px;
    right: 2px;
}

.selected .price-tag.cursor {
    top: 257px;
    background: #11131f;
    line-height: 16px;
}

.add {
    position: absolute;
    top: 257px;
    right: 47px;
    width: 17px;
    height: 16px;
    background: #11131f;
    color: #fff;
}

.add svg {
    width: 12px;
    height: 12px;
}

.times {
    position: relative;
    display: flex;
    grid-column: 1 / 3;
    align-items: center;
    padding-left: 20px;
    border-top: 1px solid #949494;
    background: #dadada;
}

.times span {
    width: 79px;
    text-align: center;
}

.selected .times {
    padding-left: 24px;
}

.selected .times span {
    width: 74px;
}

.times svg {
    width: 12px;
    height: 12px;
    margin: 0 16px 0 auto;
    color: #555;
}

.time-tag {
    position: absolute;
    top: 0;
    left: 340px;
    width: 152px;
    background: #11131f;
    color: #f0f0f0;
    font-size: 9px;
    font-weight: 600;
    line-height: 18px;
    text-align: center;
    white-space: nowrap;
}

.selected .time-tag {
    left: 171px;
}

.favorites {
    position: absolute;
    top: 62px;
    left: 178px;
    display: flex;
    align-items: center;
    justify-content: space-between;
    width: 230px;
    height: 32px;
    padding: 0 5px;
    border-radius: 4px;
    background: #2a2c2b;
    box-shadow: 0 1px 4px #444;
    color: #c8c8c8;
}

.favorites svg {
    width: 20px;
    height: 20px;
    stroke-width: 1.5;
}

.favorites .grip {
    width: 8px;
    height: 12px;
    fill: #999;
    stroke: none;
}

.ranges {
    display: flex;
    align-items: center;
    gap: 8px;
    height: 32px;
    padding: 0 10px 2px 11px;
    font-size: 11px;
    font-weight: 600;
}

.ranges svg {
    width: 16px;
    height: 16px;
    stroke-width: 1.5;
}

.ranges .max {
    width: 12px;
    height: 12px;
}

.line {
    width: 1px;
    height: 18px;
    margin: 0 2px;
    background: #444;
}

.clock {
    margin-left: auto;
}

/* right rail */
.rail {
    display: flex;
    flex-direction: column;
    align-items: center;
    gap: 15px;
    width: 41px;
    padding: 9px 4px 20px 0;
    border-left: 3px solid #303134;
    font-size: 9px;
    font-weight: 600;
    line-height: 12px;
}

.rail button {
    flex-direction: column;
    gap: 2px;
}

.rail svg {
    width: 14px;
    height: 14px;
}

.rail .layers {
    margin-bottom: auto;
}

.rail .layers svg {
    width: 19px;
    height: 19px;
    stroke-width: 1.5;
}

.rail hr {
    width: 26px;
    margin: 0 0 -3px;
}

/* order bar */
.orders {
    position: relative;
    display: flex;
    align-items: center;
    height: 42px;
    padding: 0 11px 2px 7px;
    background: #000;
    font: 700 12px/16px Lato, sans-serif;
}

.buy,
.sell {
    width: 38px;
    height: 26px;
    margin-right: 10px;
    border-radius: 13px;
    background: #16b77a;
    color: #fff;
}

.sell {
    background: #e05a5a;
}

.quantity {
    display: flex;
    align-items: center;
    width: 168px;
    height: 33px;
    margin-right: 10px;
    padding: 0 10px;
    border: 1px solid #333;
    border-radius: 8px;
}

.quantity input {
    flex: 1;
    min-width: 0;
    padding: 0;
    border: none;
    outline: none;
    background: none;
    color: #ddd;
    font: 13px/16px Lato, sans-serif;
    appearance: textfield;
}

.quantity input::placeholder {
    color: #777;
}

.quantity span {
    display: flex;
    flex-direction: column;
    gap: 5px;
}

.quantity svg {
    width: 11px;
    height: 11px;
}

.rocket {
    width: 32px;
    height: 26px;
    border-radius: 13px;
    background: #45464a;
}

.rocket svg {
    width: 13px;
    height: 13px;
}

.more {
    margin-left: auto;
    font-size: 6px;
}

.analytics {
    gap: 5px;
    width: 86px;
    height: 26px;
    margin: 0 12px 0 16px;
    border: 1px solid #3a3a3a;
    border-radius: 13px;
}

.analytics svg {
    width: 14px;
    height: 14px;
}

.stat {
    width: 119px;
    white-space: nowrap;
}

.stat.balance {
    width: 145px;
}

.stat.unrealized {
    width: 117px;
}

.order-icons {
    display: flex;
    align-items: center;
    gap: 16px;
}

.order-icons svg {
    width: 17px;
    height: 17px;
    stroke-width: 2.5;
}

.order-icons svg:nth-child(2) {
    width: 14px;
    height: 14px;
}

/* replay player floats above the order bar */
.player {
    position: absolute;
    bottom: 22px;
    left: 327px;
    display: flex;
    align-items: center;
    justify-content: space-between;
    width: 336px;
    height: 38px;
    padding: 0 6px 0 10px;
    border: 1px solid #2c2c2c;
    border-radius: 5px;
    background: #050505;
    color: #c4c4c8;
}

.player svg {
    width: 14px;
    height: 14px;
}

.player .grip {
    width: 12px;
    height: 16px;
    fill: #aaa;
    stroke: none;
}

.player input[type="range"] {
    width: 76px;
    height: 10px;
    margin: 0;
    appearance: none;
    background: linear-gradient(#333, #333) center / 100% 3px no-repeat;
}

.player input[type="range"]::-webkit-slider-thumb {
    width: 10px;
    height: 10px;
    border-radius: 50%;
    appearance: none;
    background: #0b5fff;
}

.player .step {
    gap: 6px;
    color: #e8e8e8;
    font-size: 13px;
}

.player .step svg {
    width: 11px;
    height: 11px;
    stroke-width: 3;
}

.switch {
    display: flex;
    align-items: center;
    justify-content: flex-end;
    width: 35px;
    height: 20px;
    margin: 0;
    padding: 2px;
    border-radius: 10px;
    appearance: none;
    background: #16b77a;
}

.switch::before {
    width: 16px;
    height: 16px;
    border-radius: 50%;
    background: #050505;
    content: "";
}
```
FILE: chart.js
```
// [high, body top, body bottom, low, direction]
const gbpusd = [
    [346, 357, 368, 380, 1], [352, 357, 381, 401, 0], [380, 381, 408, 409, 0], [406, 407, 422, 427, 0],
    [417, 423, 439, 446, 0], [436, 437, 447, 476, 0], [434, 447, 493, 495, 0], [454, 493, 501, 502, 0],
    [489, 501, 515, 522, 0], [488, 512, 514, 522, 0], [475, 487, 512, 516, 1], [480, 487, 514, 522, 0],
    [499, 515, 531, 544, 0], [511, 530, 563, 564, 0], [555, 562, 563, 596, 0], [554, 562, 573, 597, 0],
    [517, 522, 573, 575, 1], [478, 491, 522, 527, 1], [459, 467, 491, 492, 1], [445, 457, 467, 468, 1],
    [443, 447, 457, 467, 1], [427, 433, 447, 455, 1], [423, 434, 440, 442, 0], [417, 429, 441, 446, 1],
    [423, 429, 437, 446, 0], [393, 397, 437, 438, 1], [381, 383, 397, 403, 1], [380, 383, 385, 387, 0],
    [379, 383, 385, 388, 0], [383, 384, 397, 398, 0], [379, 381, 397, 398, 1], [376, 379, 381, 385, 0],
    [371, 379, 381, 382, 0], [381, 382, 388, 392, 0], [380, 385, 388, 389, 1], [375, 376, 385, 388, 1],
    [373, 375, 377, 384, 0], [371, 375, 377, 380, 0], [353, 357, 376, 380, 1], [357, 358, 360, 361, 0],
    [351, 358, 370, 375, 1], [353, 358, 376, 377, 0], [361, 363, 376, 377, 1], [360, 363, 366, 372, 0],
    [343, 357, 364, 366, 1], [352, 357, 362, 363, 0], [361, 362, 366, 367, 0], [362, 365, 375, 376, 0],
    [363, 365, 374, 376, 1], [363, 365, 371, 373, 0], [369, 370, 377, 378, 0], [370, 376, 378, 380, 0],
    [376, 377, 393, 394, 0], [391, 393, 398, 400, 0], [390, 393, 397, 403, 1], [387, 390, 393, 398, 0],
    [388, 389, 406, 408, 0], [393, 397, 407, 412, 1], [392, 393, 397, 405, 1], [387, 394, 403, 404, 0],
    [395, 400, 403, 404, 0], [391, 392, 399, 405, 1], [391, 392, 402, 403, 0], [400, 402, 407, 408, 0],
    [405, 407, 408, 418, 0], [398, 405, 408, 409, 1], [400, 403, 405, 407, 0], [397, 401, 405, 406, 0],
    [394, 395, 405, 406, 1], [393, 394, 396, 397, 0], [390, 394, 397, 400, 1], [385, 388, 395, 396, 1],
    [385, 388, 399, 405, 0], [390, 393, 399, 401, 1], [389, 392, 394, 401, 0], [362, 370, 394, 395, 1],
    [323, 370, 394, 395, 0], [387, 393, 396, 397, 0], [373, 379, 397, 399, 1], [367, 378, 380, 405, 0],
    [353, 375, 377, 390, 1], [360, 370, 382, 394, 1], [370, 380, 387, 390, 0], [358, 367, 387, 388, 1],
    [332, 340, 366, 367, 1], [340, 341, 349, 353, 0], [349, 350, 362, 364, 0], [321, 336, 362, 363, 1],
    [312, 332, 337, 340, 1], [311, 316, 332, 338, 1], [313, 316, 350, 358, 0], [333, 349, 364, 365, 0],
    [357, 358, 364, 365, 1], [343, 350, 358, 363, 1], [343, 348, 350, 352, 0], [335, 339, 348, 356, 0]
];

const eurusd = [
    [118, 118, 118, 137, 0], [118, 118, 118, 192, 0], [118, 118, 125, 173, 0], [118, 118, 124, 172, 1],
    null, null,
    [118, 118, 240, 293, 0], [132, 246, 423, 423, 0], [330, 387, 420, 510, 1], [282, 342, 390, 516, 1],
    [118, 116, 342, 342, 1]
];

function drawCandles(id, candles, start, step, width) {
    let html = '';
    candles.forEach((candle, i) => {
        if (!candle) return;
        const [high, top, bottom, low, up] = candle;
        const x = start + step * i;
        html += `<path class="wick" d="M${x.toFixed(1)} ${high}V${low}"/>`;
        html += `<rect class="${up ? 'up' : 'down'}" x="${(x - width / 2).toFixed(1)}" y="${top}" width="${width}" height="${bottom - top}"/>`;
    });
    document.getElementById(id).innerHTML = html;
}

drawCandles('gbpusd', gbpusd, 664, 3.09, 2);
document.getElementById('eurusd').setAttribute('class', 'bright');
drawCandles('eurusd', eurusd, 285.5, 3.3, 3);
```
